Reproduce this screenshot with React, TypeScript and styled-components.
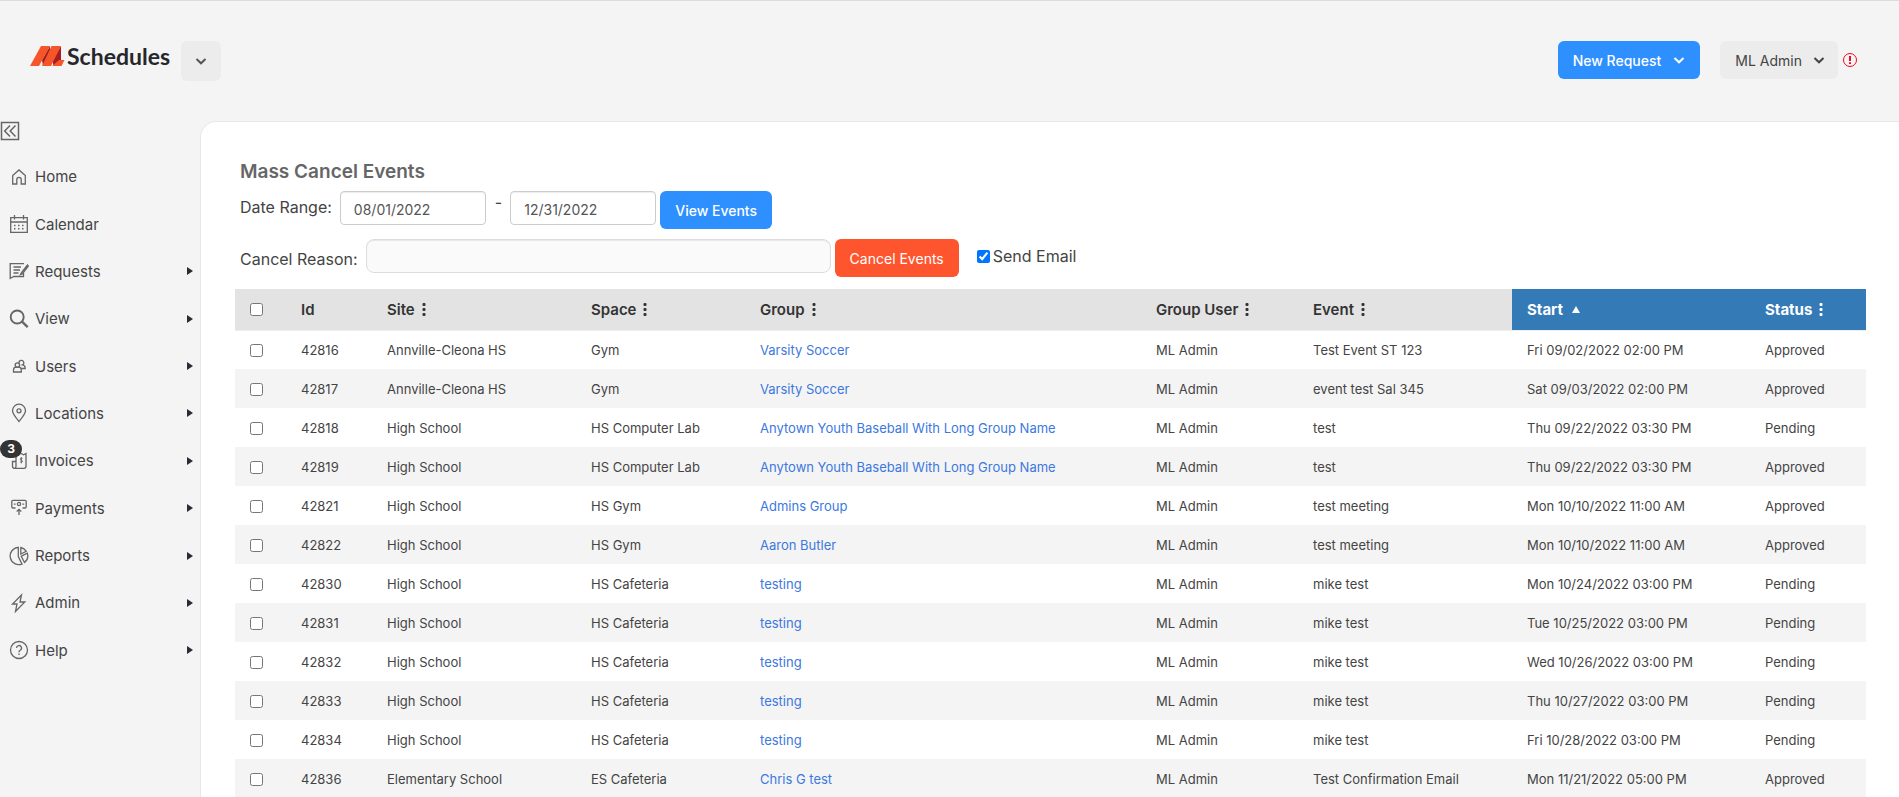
import React from "react";
import styled, { createGlobalStyle, css } from "styled-components";

const GlobalStyle = createGlobalStyle`
  *, *::before, *::after { box-sizing: border-box; }
  body {
    margin: 0;
    background: #f4f4f4;
    color: #444;
    font-family: Inter, "Liberation Sans", sans-serif;
    font-weight: 400;
  }
  button, input { font-family: inherit; }
`;

const Page = styled.div`
  display: flex;
  flex-direction: column;
  height: 100vh;
  overflow: hidden;
  border-top: 1px solid #dcdcdc;
`;

const TopBar = styled.header`
  display: flex;
  flex-shrink: 0;
  align-items: flex-start;
  justify-content: space-between;
  height: 120px;
  padding: 40px 42px 0 30px;
`;

const Brand = styled.div`
  display: flex;
  gap: 11px;
`;

const Logo = styled.a`
  display: flex;
  align-items: center;
  gap: 2px;
  height: 30px;
  color: #26262b;
  font: 700 23px/30px Lato, "Liberation Sans", sans-serif;
  text-decoration: none;
`;

const SwitchButton = styled.button`
  display: flex;
  align-items: center;
  justify-content: center;
  width: 40px;
  height: 40px;
  padding: 0;
  border: 0;
  border-radius: 6px;
  background: #ececec;
  color: #555;
`;

const Account = styled.div`
  display: flex;
  align-items: center;
  gap: 5px;
`;

const Button = styled.button<{ $tone: "primary" | "danger" | "muted" }>`
  display: inline-flex;
  flex-shrink: 0;
  align-items: center;
  gap: 12px;
  height: 38px;
  padding: 0 15px;
  border: 0;
  border-radius: 6px;
  font-size: 14px;
  font-weight: 500;
  white-space: nowrap;
  color: #fff;
  background: #2e8fff;
  ${(p) => p.$tone === "danger" && css`background: #ff552e; font-weight: 400;`}
  ${(p) => p.$tone === "muted" && css`background: #ececec; color: #444; font-weight: 400; margin-left: 15px; gap: 11px; padding-right: 13px;`}
`;

const Body = styled.div`
  display: flex;
  flex: 1;
  min-height: 0;
`;

const Sidebar = styled.nav`
  flex: 0 0 200px;
`;

const CollapseButton = styled.button`
  display: block;
  width: 20px;
  height: 20px;
  margin: 0 0 12px;
  padding: 0;
  border: 0;
  background: none;
  color: #666;
`;

const Menu = styled.ul`
  display: grid;
  grid-auto-rows: 1fr;
  height: 521px;
  margin: 0;
  padding: 0;
  list-style: none;
`;

const MenuLink = styled.a`
  position: relative;
  display: flex;
  align-items: center;
  height: 100%;
  padding: 0 7px 0 9px;
  color: #444;
  font-size: 15px;
  text-decoration: none;
`;

const MenuIcon = styled.svg`
  flex-shrink: 0;
  width: 20px;
  height: 20px;
  margin-right: 6px;
  fill: none;
  stroke: #666;
  stroke-width: 1.3;
`;

const MenuText = styled.span`
  flex: 1;
`;

const Badge = styled.span`
  position: absolute;
  top: 3px;
  left: 0;
  width: 22px;
  height: 18px;
  border-radius: 9px;
  background: #333;
  color: #fff;
  font-size: 12px;
  font-weight: 700;
  line-height: 18px;
  text-align: center;
`;

const Panel = styled.main`
  flex: 1;
  min-width: 0;
  padding: 38px 33px 0 34px;
  overflow: hidden;
  border: solid #e8e8e8;
  border-width: 1px 0 0 1px;
  border-top-left-radius: 16px;
  background: #fff;
`;

const Title = styled.h1`
  margin: 0 0 7px 5px;
  color: #666;
  font-size: 19px;
  font-weight: 600;
  line-height: 24px;
`;

const FormRow = styled.div`
  display: flex;
  align-items: flex-start;
  height: 48px;
  padding-left: 5px;
  font-size: 16px;
  line-height: 32px;
`;

const TextBox = styled.input<{ $wide?: boolean }>`
  width: ${(p) => (p.$wide ? "465px" : "146px")};
  height: 34px;
  margin: 0 4px 0 8px;
  padding: 2px 13px 0;
  border: 1px solid ${(p) => (p.$wide ? "#ddd" : "#ccc")};
  border-radius: ${(p) => (p.$wide ? "8px" : "4px")};
  background: ${(p) => (p.$wide ? "#fafafa" : "#fff")};
  box-shadow: inset 0 1px 1px rgba(0, 0, 0, 0.075);
  color: #555;
  font-size: 14px;
  font-weight: 400;
`;

const Dash = styled.span`
  margin-left: 5px;
  line-height: 22px;
`;

const ReasonLabel = styled.label`
  line-height: 40px;
`;

const SendEmail = styled.label`
  display: flex;
  align-items: center;
  gap: 3px;
  margin-left: 18px;
  line-height: 34px;
`;

const Check = styled.input`
  display: block;
  width: 13px;
  height: 13px;
  margin: 0;
`;

const Table = styled.table`
  width: 100%;
  margin-top: 2px;
  border-collapse: collapse;
  table-layout: fixed;
  font-size: 13px;
`;

const Col = styled.col<{ $w: number }>`
  width: ${(p) => p.$w}px;
`;

const HeadCell = styled.th<{ $active?: boolean }>`
  height: 41px;
  padding: 0 15px;
  border-bottom: 1px solid #eee;
  background: ${(p) => (p.$active ? "#337ab7" : "#e3e3e3")};
  color: ${(p) => (p.$active ? "#fff" : "#333")};
  font-size: 15px;
  font-weight: ${(p) => (p.$active ? 700 : 600)};
  text-align: left;
  white-space: nowrap;
`;

const HeadLabel = styled.span`
  display: flex;
  align-items: center;
  gap: 7px;
`;

const Row = styled.tr`
  &:nth-child(even) { background: #f4f4f4; }
`;

const Cell = styled.td`
  height: 39px;
  padding: 1px 15px 0;
  white-space: nowrap;
`;

const GroupLink = styled.a`
  color: #3c78e0;
  text-decoration: none;
`;

const Chevron = () => (
  <svg width="12" height="12" viewBox="0 0 12 12" fill="none" stroke="currentColor" strokeWidth="2">
    <path d="M1.500 4 6 8.300 10.500 4" />
  </svg>
);

const Dots = () => (
  <svg width="4" height="14" viewBox="0 0 4 14" fill="currentColor">
    <rect x=".5" y="1" width="3" height="3" rx="1" />
    <rect x=".5" y="6" width="3" height="3" rx="1" />
    <rect x=".5" y="11" width="3" height="3" rx="1" />
  </svg>
);

const Caret = () => (
  <svg width="6" height="8" viewBox="0 0 6 8" fill="#2b2b33"><path d="M0 0 6 4 0 8z" /></svg>
);

const icons: Record<string, React.ReactNode> = {
  Home: <path d="M3.700 17V8.500L10 2.900l6.300 5.600V17h-4.100v-4.500a2.200 2.200 0 0 0-4.400 0V17z" />,
  Calendar: (
    <>
      <path d="M1.700 3.700h16.600v14.600H1.700zM1.700 8h16.600M5.500 1v4.500M14.500 1v4.500" />
      <path d="M5 11.500h11M5 14.700h11" strokeDasharray="1.500 2.500" strokeWidth="1.500" />
    </>
  ),
  Requests: (
    <>
      <path d="M15 2.700H1.200V17.500l3.500-2H14.500V12M4.500 6h7.500M4.500 9h6.500M4.500 12h5" />
      <path d="M18.500 4 12.500 11.500l-1 2 2-.9 5.800-7.500z" />
    </>
  ),
  View: (
    <>
      <circle cx="8.200" cy="8" r="6.500" strokeWidth="1.900" />
      <path d="m13 12.700 5.700 5.500" strokeWidth="2.300" />
    </>
  ),
  Users: (
    <>
      <path d="M4.500 16v-2.200c0-1.800 1-2.600 3-2.600h1.800c2 0 3 .8 3 2.600V16z" />
      <circle cx="8.400" cy="9" r="2.200" />
      <path d="M10 7a2.400 2.400 0 1 1 3.500 1.900c1.700.2 2.700 1 2.700 3.600H12" />
    </>
  ),
  Locations: (
    <>
      <path d="M10 18.500C6 13.500 3.500 10.700 3.500 7.700a6.500 6.500 0 0 1 13 0c0 3-2.500 5.800-6.500 10.800z" />
      <circle cx="10" cy="7.800" r="2" />
    </>
  ),
  Invoices: (
    <>
      <path d="M7 2.500l2.500 1.300L12 2.500l2.500 1.300 2.500-1.300V15.300a2 2 0 0 1-2 2H5.500a2 2 0 0 1-2-2V10.500H7v5c0 1-.6 1.800-1.500 1.800M7 2.500v8" />
      <path d="M13.500 7.500c-2.500-1-3 1.500-1.200 1.800 2 .4 1.300 2.600-1 1.700M12.300 6v6.300" strokeWidth="1" />
    </>
  ),
  Payments: (
    <>
      <path d="M6.500 10H4a1.200 1.200 0 0 1-1.200-1.200V3.500A1.200 1.200 0 0 1 4 2.300h12a1.200 1.200 0 0 1 1.200 1.200v5.300A1.200 1.200 0 0 1 16 10h-2.500M10 17v-5M7.700 13.500 10 11.300l2.300 2.200M4.800 6.200h1.800M13.400 6.200h1.800" />
      <circle cx="10" cy="6" r="1.600" />
    </>
  ),
  Reports: (
    <>
      <path d="M9.300 1.300a8.700 8.700 0 1 0 3.700 16.800L9.300 10.500z" />
      <path d="M11.800 1.500a8.500 8.500 0 0 1 5.500 3.800l-5.500 2.700zM12.300 10.200l6-3a8.500 8.500 0 0 1-2.800 9.300z" />
    </>
  ),
  Admin: <path d="m12.500 2-9 9H8l-1.500 7.500 9.300-9.500H11z" />,
  Help: (
    <>
      <circle cx="10" cy="10" r="8.500" />
      <path d="M7.500 8a2.500 2.500 0 1 1 3.700 2.200c-.8.500-1.200.9-1.200 2M10 13.500v1.400" />
    </>
  ),
};

const columns = [
  { name: "Id", width: 86 },
  { name: "Site", width: 204, menu: true },
  { name: "Space", width: 169, menu: true },
  { name: "Group", width: 396, menu: true },
  { name: "Group User", width: 157, menu: true },
  { name: "Event", width: 214, menu: true },
  { name: "Start", width: 238, active: true },
  { name: "Status", width: 116, menu: true, active: true },
];

const longGroup = "Anytown Youth Baseball With Long Group Name";
const events = [
  ["42816", "Annville-Cleona HS", "Gym", "Varsity Soccer", "Test Event ST 123", "Fri 09/02/2022 02:00 PM", "Approved"],
  ["42817", "Annville-Cleona HS", "Gym", "Varsity Soccer", "event test Sal 345", "Sat 09/03/2022 02:00 PM", "Approved"],
  ["42818", "High School", "HS Computer Lab", longGroup, "test", "Thu 09/22/2022 03:30 PM", "Pending"],
  ["42819", "High School", "HS Computer Lab", longGroup, "test", "Thu 09/22/2022 03:30 PM", "Approved"],
  ["42821", "High School", "HS Gym", "Admins Group", "test meeting", "Mon 10/10/2022 11:00 AM", "Approved"],
  ["42822", "High School", "HS Gym", "Aaron Butler", "test meeting", "Mon 10/10/2022 11:00 AM", "Approved"],
  ["42830", "High School", "HS Cafeteria", "testing", "mike test", "Mon 10/24/2022 03:00 PM", "Pending"],
  ["42831", "High School", "HS Cafeteria", "testing", "mike test", "Tue 10/25/2022 03:00 PM", "Pending"],
  ["42832", "High School", "HS Cafeteria", "testing", "mike test", "Wed 10/26/2022 03:00 PM", "Pending"],
  ["42833", "High School", "HS Cafeteria", "testing", "mike test", "Thu 10/27/2022 03:00 PM", "Pending"],
  ["42834", "High School", "HS Cafeteria", "testing", "mike test", "Fri 10/28/2022 03:00 PM", "Pending"],
  ["42836", "Elementary School", "ES Cafeteria", "Chris G test", "Test Confirmation Email", "Mon 11/21/2022 05:00 PM", "Approved"],
];

export default function App() {
  return (
    <Page>
      <GlobalStyle />
      <TopBar>
        <Brand>
          <Logo href="#">
            <svg width="35" height="20" viewBox="0 0 35 20">
              <path d="M20 0v9l-4.500 11H13l-1-6z" fill="#a51e22" />
              <path d="M31 0v14l-5 6h-2.500l-1-6z" fill="#a51e22" />
              <path d="M11 0h9L9 20H0z" fill="#f4562a" />
              <path d="M21.500 0H31L21 20h-9z" fill="#f4562a" />
              <path d="M29 14h5.500L31.500 20H22z" fill="#f4562a" />
            </svg>
            Schedules
          </Logo>
          <SwitchButton aria-label="Switch product"><Chevron /></SwitchButton>
        </Brand>
        <Account>
          <Button $tone="primary">New Request <Chevron /></Button>
          <Button $tone="muted">ML Admin <Chevron /></Button>
          <svg width="14" height="14" viewBox="0 0 14 14" fill="none" stroke="#f5051f">
            <circle cx="7" cy="7" r="6.500" />
            <path d="M7 3v5M7 9.200v1.800" strokeWidth="2" />
          </svg>
        </Account>
      </TopBar>
      <Body>
        <Sidebar>
          <CollapseButton aria-label="Collapse menu">
            <svg width="20" height="20" viewBox="0 0 20 20" fill="none" stroke="currentColor" strokeWidth="1.500">
              <path d="M1.500 1.500h17v17h-17zM10 4.500 4.700 10l5.300 5.500M15.500 4.500 10.200 10l5.300 5.500" />
            </svg>
          </CollapseButton>
          <Menu>
            {Object.keys(icons).map((name) => (
              <li key={name}>
                <MenuLink href="#">
                  <MenuIcon viewBox="0 0 20 20">{icons[name]}</MenuIcon>
                  <MenuText>{name}</MenuText>
                  {name === "Invoices" && <Badge>3</Badge>}
                  {name !== "Home" && name !== "Calendar" && <Caret />}
                </MenuLink>
              </li>
            ))}
          </Menu>
        </Sidebar>
        <Panel>
          <Title>Mass Cancel Events</Title>
          <FormRow>
            <label htmlFor="from">Date Range:</label>
            <TextBox id="from" defaultValue="08/01/2022" />
            <Dash>-</Dash>
            <TextBox aria-label="End date" defaultValue="12/31/2022" />
            <Button $tone="primary">View Events</Button>
          </FormRow>
          <FormRow>
            <ReasonLabel htmlFor="reason">Cancel Reason:</ReasonLabel>
            <TextBox id="reason" $wide />
            <Button $tone="danger">Cancel Events</Button>
            <SendEmail><Check type="checkbox" defaultChecked />Send Email</SendEmail>
          </FormRow>
          <Table>
            <colgroup>
              <Col $w={51} />
              {columns.map((c) => <Col key={c.name} $w={c.width} />)}
            </colgroup>
            <thead>
              <tr>
                <HeadCell><HeadLabel><Check type="checkbox" aria-label="Select all" /></HeadLabel></HeadCell>
                {columns.map((c) => (
                  <HeadCell key={c.name} $active={c.active}>
                    <HeadLabel>
                      {c.name}
                      {c.menu && <Dots />}
                      {c.name === "Start" && (
                        <svg width="12" height="8" viewBox="0 0 12 8" fill="currentColor"><path d="M2 8 6 1l4 7z" /></svg>
                      )}
                    </HeadLabel>
                  </HeadCell>
                ))}
              </tr>
            </thead>
            <tbody>
              {events.map(([id, site, space, group, event, start, status]) => (
                <Row key={id}>
                  <Cell><Check type="checkbox" aria-label={`Select ${id}`} /></Cell>
                  <Cell>{id}</Cell>
                  <Cell>{site}</Cell>
                  <Cell>{space}</Cell>
                  <Cell><GroupLink href="#">{group}</GroupLink></Cell>
                  <Cell>ML Admin</Cell>
                  <Cell>{event}</Cell>
                  <Cell>{start}</Cell>
                  <Cell>{status}</Cell>
                </Row>
              ))}
            </tbody>
          </Table>
        </Panel>
      </Body>
    </Page>
  );
}
